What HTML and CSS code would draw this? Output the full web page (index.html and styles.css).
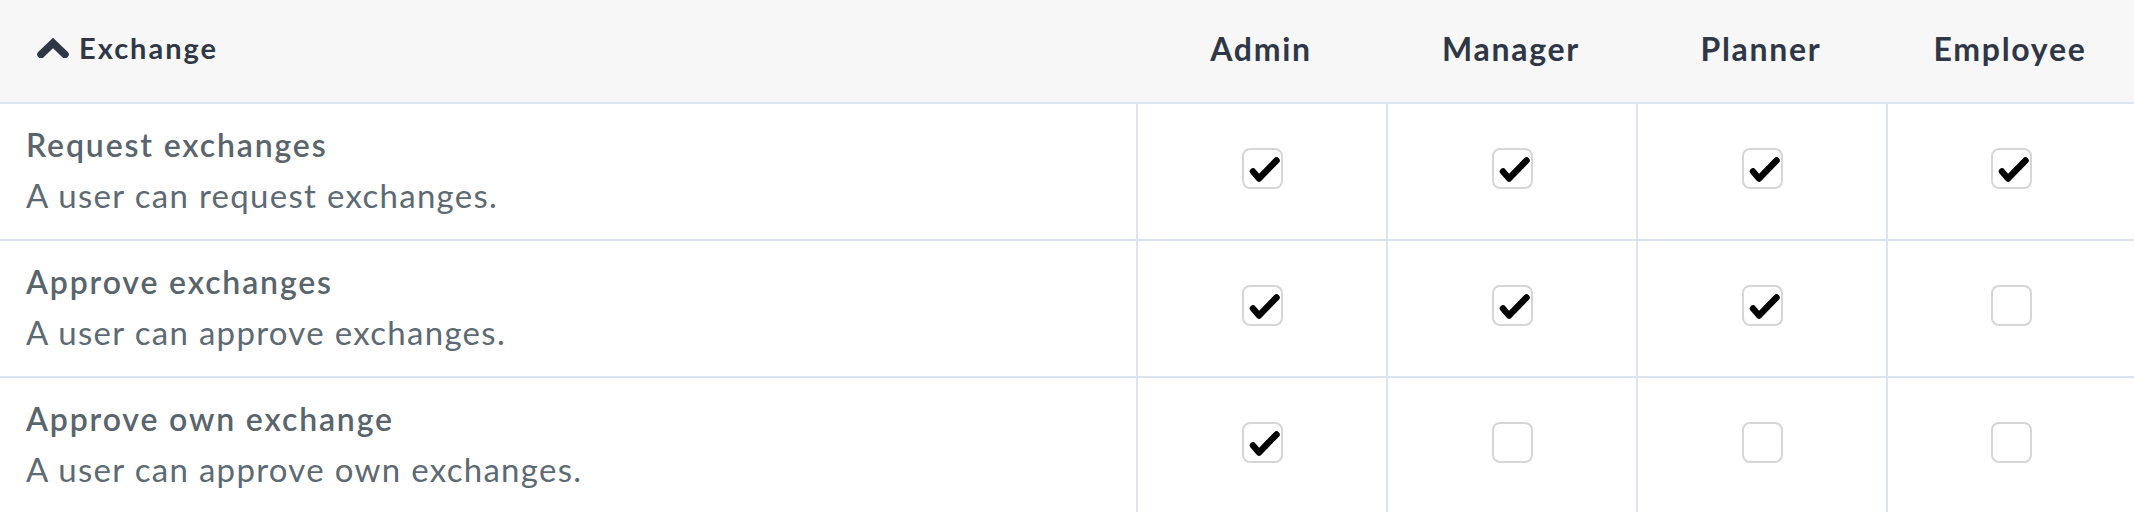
FILE: index.html
```html
<!DOCTYPE html>
<html lang="en">
<head>
<meta charset="utf-8">
<title>Exchange permissions</title>
<link rel="stylesheet" href="styles.css">
</head>
<body>
<div class="table">
  <div class="row head">
    <div class="cell group">
      <svg class="chev" viewBox="0 0 32 20" width="32" height="20"><polyline points="4,16.5 16,5 28,16.5" fill="none" stroke="#2f3747" stroke-width="7.5" stroke-linejoin="miter" stroke-linecap="round"/></svg>
      <span>Exchange</span>
    </div>
    <div class="cell role">Admin</div>
    <div class="cell role">Manager</div>
    <div class="cell role">Planner</div>
    <div class="cell role">Employee</div>
  </div>

  <div class="row">
    <div class="cell perm">
      <div class="title">Request exchanges</div>
      <div class="desc">A user can request exchanges.</div>
    </div>
    <div class="cell box"><span class="cb on"><svg viewBox="0 0 41 41"><polyline points="11,23.5 17,30.5 34.5,12.5" /></svg></span></div>
    <div class="cell box"><span class="cb on"><svg viewBox="0 0 41 41"><polyline points="11,23.5 17,30.5 34.5,12.5" /></svg></span></div>
    <div class="cell box"><span class="cb on"><svg viewBox="0 0 41 41"><polyline points="11,23.5 17,30.5 34.5,12.5" /></svg></span></div>
    <div class="cell box"><span class="cb on"><svg viewBox="0 0 41 41"><polyline points="11,23.5 17,30.5 34.5,12.5" /></svg></span></div>
  </div>

  <div class="row">
    <div class="cell perm">
      <div class="title">Approve exchanges</div>
      <div class="desc">A user can approve exchanges.</div>
    </div>
    <div class="cell box"><span class="cb on"><svg viewBox="0 0 41 41"><polyline points="11,23.5 17,30.5 34.5,12.5" /></svg></span></div>
    <div class="cell box"><span class="cb on"><svg viewBox="0 0 41 41"><polyline points="11,23.5 17,30.5 34.5,12.5" /></svg></span></div>
    <div class="cell box"><span class="cb on"><svg viewBox="0 0 41 41"><polyline points="11,23.5 17,30.5 34.5,12.5" /></svg></span></div>
    <div class="cell box"><span class="cb"></span></div>
  </div>

  <div class="row">
    <div class="cell perm">
      <div class="title">Approve own exchange</div>
      <div class="desc">A user can approve own exchanges.</div>
    </div>
    <div class="cell box"><span class="cb on"><svg viewBox="0 0 41 41"><polyline points="11,23.5 17,30.5 34.5,12.5" /></svg></span></div>
    <div class="cell box"><span class="cb"></span></div>
    <div class="cell box"><span class="cb"></span></div>
    <div class="cell box"><span class="cb"></span></div>
  </div>
</div>
</body>
</html>
```
FILE: styles.css
```css
html, body {
  margin: 0;
  padding: 0;
  background: #ffffff;
  font-family: "Lato", "Liberation Sans", sans-serif;
}

.table {
  width: 2134px;
}

.row {
  display: grid;
  grid-template-columns: 1136px 250px 250px 250px 1fr;
  height: 135px;
  border-bottom: 2px solid #dce4ef;
}

.row.head {
  height: 102px;
  background: #f7f7f7;
}

.cell {
  display: flex;
  align-items: center;
  justify-content: center;
}

.head .group {
  justify-content: flex-start;
  padding-left: 37px;
  gap: 10px;
  font-size: 29px;
  letter-spacing: 2px;
  font-weight: 700;
  color: #2f3747;
  padding-bottom: 8px;
}

.chev {
  display: block;
  margin-top: 2px;
}

.head .role {
  font-size: 32px;
  letter-spacing: 1.7px;
  font-weight: 700;
  color: #2f3747;
  padding-bottom: 6px;
}

.perm {
  flex-direction: column;
  align-items: flex-start;
  justify-content: flex-start;
  padding: 15px 0 0 26px;
}

.title {
  font-size: 32px;
  letter-spacing: 1.85px;
  line-height: 51px;
  font-weight: 600;
  color: #59646c;
}

.desc {
  font-size: 33px;
  letter-spacing: 1.3px;
  line-height: 51px;
  font-weight: 400;
  color: #5e6a73;
}

.box {
  border-left: 2px solid #dce4ef;
  padding-bottom: 6px;
}

.cb {
  box-sizing: border-box;
  width: 41px;
  height: 41px;
  border: 2px solid #d6d6d6;
  border-radius: 8px;
  background: #ffffff;
  position: relative;
}

.cb svg {
  position: absolute;
  left: -2px;
  top: -2px;
  width: 41px;
  height: 41px;
}

.cb polyline {
  fill: none;
  stroke: #000000;
  stroke-width: 6.5;
  stroke-linecap: round;
  stroke-linejoin: round;
}
```
